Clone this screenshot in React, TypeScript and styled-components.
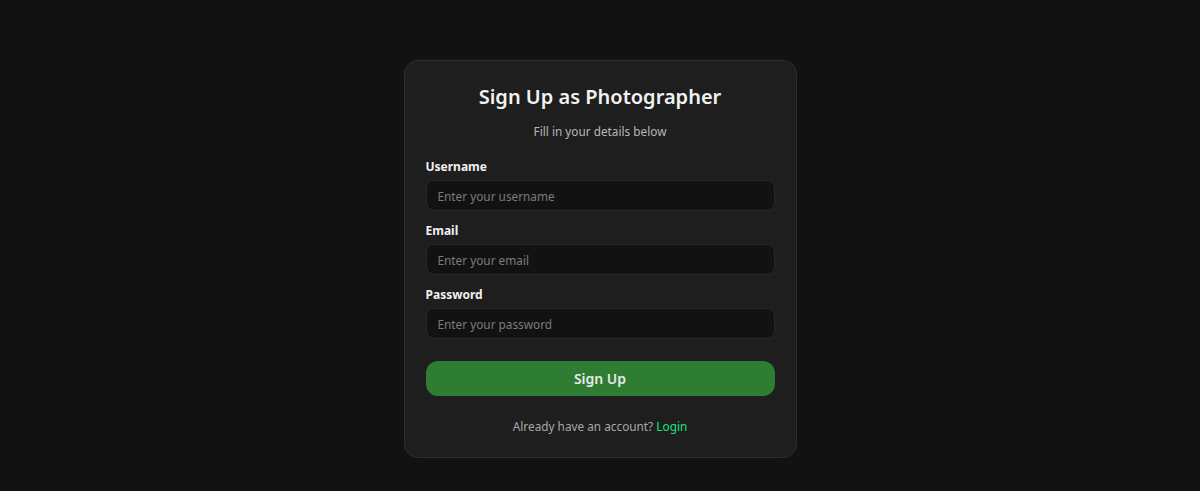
import styled, { createGlobalStyle } from "styled-components";

const GlobalStyle = createGlobalStyle`
  html, body {
    margin: 0;
    padding: 0;
    background: #121212;
    font-family: "Segoe UI", "Noto Sans", "Open Sans", sans-serif;
  }
  * { box-sizing: border-box; }
`;

const Page = styled.div`
  min-height: 491px;
  display: flex;
  justify-content: center;
  align-items: flex-start;
  padding-top: 60px;
`;

const Card = styled.form`
  width: 393px;
  background: #1e1e1e;
  border: 1px solid #263326;
  border-radius: 14px;
  padding: 22px 21px 22px;
  display: flex;
  flex-direction: column;
`;

const Title = styled.h2`
  margin: 0;
  font-size: 20px;
  font-weight: 600;
  line-height: 28px;
  color: #f2f2f2;
  text-align: center;
`;

const Subtitle = styled.p`
  margin: 11px 0 0;
  font-size: 11.8px;
  line-height: 18px;
  color: #b8b8b8;
  text-align: center;
`;

const Fields = styled.div`
  margin-top: 18px;
  display: flex;
  flex-direction: column;
  gap: 11px;
`;

const Field = styled.label`
  display: flex;
  flex-direction: column;
  gap: 4px;
`;

const LabelText = styled.span`
  font-size: 12px;
  font-weight: 700;
  line-height: 18px;
  color: #f0f0f0;
`;

const Input = styled.input`
  height: 31px;
  width: 100%;
  background: #121212;
  border: 1px solid #1f2e1f;
  border-radius: 8px;
  padding: 0 11px;
  font-family: inherit;
  font-size: 11.8px;
  color: #e0e0e0;
  outline: none;

  &::placeholder {
    color: #7c7c7c;
  }
`;

const SubmitButton = styled.button`
  margin-top: 22px;
  height: 35px;
  width: 100%;
  border: none;
  border-radius: 12px;
  background: #2e7d32;
  color: #e8e8e8;
  font-family: inherit;
  font-size: 14px;
  font-weight: 600;
  cursor: pointer;
`;

const Footer = styled.p`
  margin: 21px 0 0;
  font-size: 11.8px;
  line-height: 18px;
  color: #a8a8a8;
  text-align: center;
`;

const LoginLink = styled.a`
  color: #1de47a;
  text-decoration: none;
`;

const fields = [
  { label: "Username", type: "text", placeholder: "Enter your username" },
  { label: "Email", type: "email", placeholder: "Enter your email" },
  { label: "Password", type: "password", placeholder: "Enter your password" },
];

export default function App() {
  return (
    <>
      <GlobalStyle />
      <Page>
        <Card onSubmit={(e) => e.preventDefault()}>
          <Title>Sign Up as Photographer</Title>
          <Subtitle>Fill in your details below</Subtitle>
          <Fields>
            {fields.map((f) => (
              <Field key={f.label}>
                <LabelText>{f.label}</LabelText>
                <Input type={f.type} placeholder={f.placeholder} />
              </Field>
            ))}
          </Fields>
          <SubmitButton type="submit">Sign Up</SubmitButton>
          <Footer>
            Already have an account? <LoginLink href="#">Login</LoginLink>
          </Footer>
        </Card>
      </Page>
    </>
  );
}
